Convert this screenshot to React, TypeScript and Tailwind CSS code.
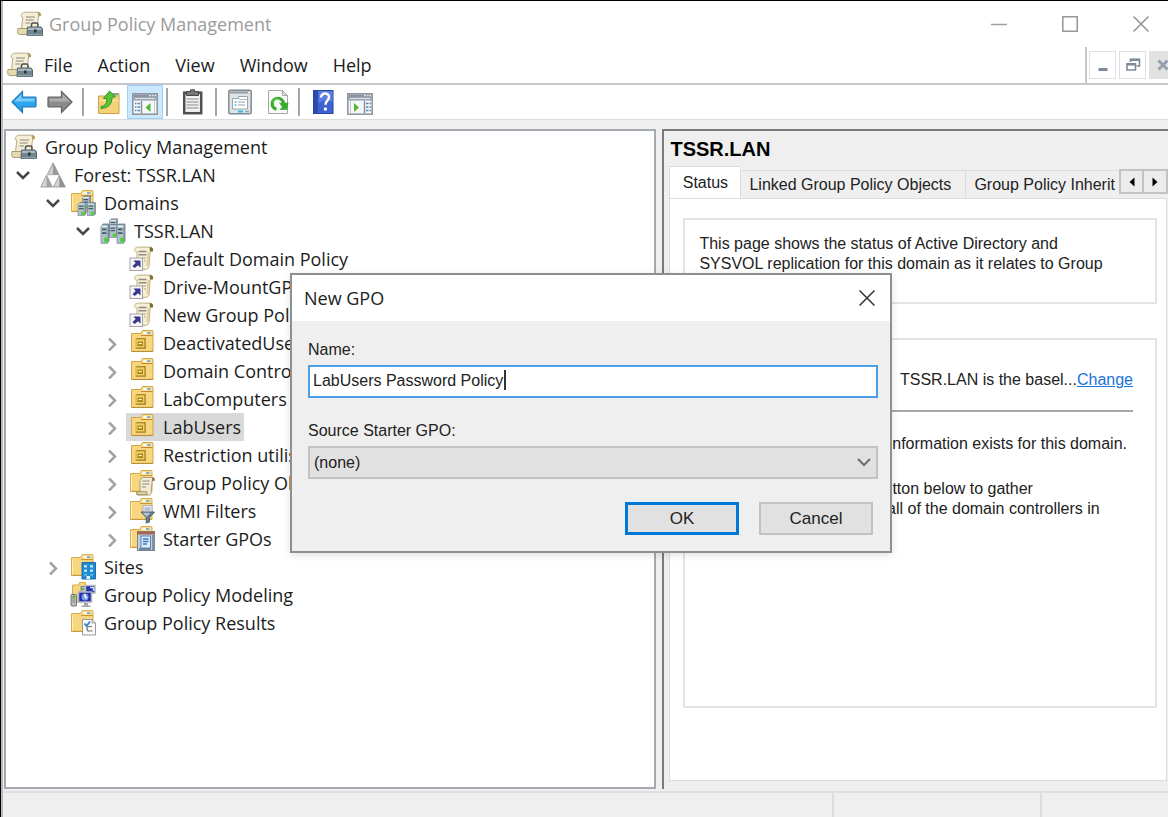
import type { ReactNode } from "react";

type IconProps = { className?: string };

const ICON = "h-[26px] w-[26px] shrink-0";

function Svg({ children, className = ICON }: { children: ReactNode; className?: string }) {
  return (
    <svg viewBox="0 0 26 26" className={className} fill="none" aria-hidden="true">
      {children}
    </svg>
  );
}

function ConsoleIcon({ className }: IconProps) {
  return (
    <Svg className={className}>
      <path d="M5 2.5C7 .8 9 1.2 11 1.2h10c2.200 0 3 1.400 2.600 3.400l-2 .6-1.600 13H4.500L5.800 6C4 6.500 3.500 4 5 2.500z" fill="#f5eed6" stroke="#b9ac87" />
      <path d="M20.500 1.300c2.800-.3 3.700 1.600 3 3.800l-2.400.2c-.2-1.700-.2-3-.6-4z" fill="#b59f62" />
      <path d="M9 6h9M8.700 9h8M8.300 12h5" stroke="#8c8a82" strokeWidth="1.200" />
      <path d="M1 17.500h11v6H2.500C.5 23.500.3 19.500 1 17.500z" fill="#e6dab0" stroke="#a99a6c" />
      <path d="M14.500 16v-2.500c0-1 .6-1.500 1.500-1.500h3.500c1 0 1.500.5 1.500 1.500V16" stroke="#4b4f52" strokeWidth="1.500" />
      <path d="M10.500 16h13.500l1.500 2v6.500H10z" fill="#71858f" stroke="#52636c" />
      <path d="M11 16.700h12.700l1 2.300H10.800z" fill="#a9bac3" />
      <rect x="17" y="18.500" width="2.600" height="3" fill="#28333a" />
      <path d="M10.500 23.800h14.600" stroke="#9fb0b8" />
    </Svg>
  );
}

function ForestIcon() {
  return (
    <Svg>
      <path d="M13 .8l6 12H7.200z" fill="#cdcdcd" stroke="#8f8f8f" strokeWidth=".8" />
      <path d="M13 .8l6 12h-6z" fill="#999" />
      <path d="M6.500 13.200l6 11.800H.8z" fill="#d6d6d6" stroke="#8f8f8f" strokeWidth=".8" />
      <path d="M6.500 13.200l6 11.800h-6z" fill="#a2a2a2" />
      <path d="M19.300 13.200l6 11.800H13.400z" fill="#d3d3d3" stroke="#8f8f8f" strokeWidth=".8" />
      <path d="M19.300 13.200l6 11.800h-6z" fill="#929292" />
      <path d="M7.500 13.600h10.900L13 24z" fill="#fff" />
    </Svg>
  );
}

function FolderShape() {
  return (
    <>
      <path d="M1.500 3.500h9.500l1-2.500c.2-.4.500-.5 1-.5h9c.8 0 1 .4 1 1V21.500h-21.500z" fill="#f7d67f" stroke="#d9ac4f" />
      <path d="M12.500 1.500h9.500v3h-9.500z" fill="#fae7ae" />
      <path d="M13.500 3h3" stroke="#fff" strokeWidth="1.500" />
      <path d="M17 3h3.500" stroke="#5ba3cf" strokeWidth="1.500" />
      <path d="M11 5.500h11.800M2 21.300h20.500" stroke="#cb9838" />
      <path d="M2.500 5v15.500" stroke="#fdeebb" />
    </>
  );
}

function Server({ x, y }: { x: number; y: number }) {
  return (
    <g transform={`translate(${x} ${y})`}>
      <path d="M.5 2L2.500.500h6V12l-1.500 1.500H.5z" fill="#8399a4" stroke="#647985" strokeWidth=".6" />
      <path d="M.8 2.200h6v11h-6z" fill="#b0c1ca" />
      <path d="M1.500 4.200h4.500M1.500 6.700h4.500" stroke="#465b67" strokeWidth="1.200" />
      <path d="M1 2h6" stroke="#eef5f8" />
      <rect x="3.700" y="9.800" width="3.200" height="3" fill="#47d72b" />
    </g>
  );
}

function DomainsIcon() {
  return (
    <Svg>
      <FolderShape />
      <Server x={12} y={5.500} />
      <Server x={7.500} y={12} />
      <Server x={17} y={12} />
    </Svg>
  );
}

function DomainIcon() {
  return (
    <Svg>
      <Server x={9} y={0.300} />
      <Server x={9} y={6} />
      <g transform="translate(.5 4.500) scale(1 1.480)"><Server x={0} y={0.500} /></g>
      <g transform="translate(16.500 4.500) scale(1 1.480)"><Server x={0} y={0.500} /></g>
    </Svg>
  );
}

function PolicyLinkIcon() {
  return (
    <Svg>
      <path d="M6.500 2c1.500-1 3-.9 4.500-.9h10.500c2 0 2.500 1.600 2 3.500l-2.300.4-1 14c-.2 3-1.600 4.400-4.200 4.400H8V6C5.300 6 4.800 3.300 6.500 2z" fill="#f6efd3" stroke="#c0b184" />
      <path d="M20.500 1.200c2.700-.4 4.200 1.300 3.300 4.200l-2.600.1z" fill="#7c683b" />
      <path d="M19.500 6L18.300 20" stroke="#dfd09c" strokeWidth="2" />
      <path d="M9.500 5.500h8M9.500 8.700h8" stroke="#8e8d86" strokeWidth="1.400" />
      <path d="M13 12h4M15 15h2" stroke="#aaa89d" />
      <rect x="1" y="12" width="12.500" height="12.500" fill="#f7f7f7" stroke="#a1a1a1" />
      <path d="M4.500 14.500h7v7L9 19.300 5.700 22 3.500 20l3.200-3z" fill="#35358b" />
    </Svg>
  );
}

function OuIcon() {
  return (
    <Svg>
      <path d="M2.500 3.500H12l1-2.300C13.200.7 13.500.5 14 .5h9c.8 0 1 .5 1 1V21.500H2.500z" fill="#f7d67f" stroke="#d3a444" />
      <path d="M13.500 1.500H23v3h-9.500z" fill="#fae7ae" />
      <path d="M14.500 3h3" stroke="#fff" strokeWidth="1.500" />
      <path d="M18 3h3.500" stroke="#5ba3cf" strokeWidth="1.500" />
      <path d="M12 5.500h11.500M3 21.400h21" stroke="#bf892e" />
      <rect x="7" y="8.500" width="9.500" height="10" fill="#efcf64" stroke="#d3b04a" />
      <path d="M7.500 8.800h9M16 9v9M7.500 18h9" stroke="#9a7820" strokeWidth="1" />
      <rect x="8.500" y="11.500" width="5.500" height="4.500" fill="#a88317" />
      <path d="M9.500 13.500h3.500" stroke="#fff1a8" strokeWidth="1.300" />
    </Svg>
  );
}

function ObjectsIcon() {
  return (
    <Svg>
      <FolderShape />
      <path d="M12 8.500c1-1 2-1 3-1h8.500c2 0 2.300 1.500 1.700 3h-2l-1.200 13c-.3 1-1 1.500-2 1.500H9c-1.500 0-1.800-2-1-3.300h3V11z" fill="#f2ecd5" stroke="#aaa07c" />
      <path d="M23 7.500c2.500 0 3 1.600 2.300 3.500H23z" fill="#8e7a4a" />
      <path d="M13.500 11h7M13.300 14h7M13 17h4" stroke="#8f8e85" strokeWidth="1.200" />
      <path d="M8 21.700h10v3H8z" fill="#e0d3a4" stroke="#a69568" />
    </Svg>
  );
}

function FilterIcon() {
  return (
    <Svg>
      <FolderShape />
      <rect x="14" y="7.500" width="9" height="8" fill="#eef1f5" stroke="#aab1bd" />
      <path d="M15.500 10h6M15.500 12h6" stroke="#8b91b5" />
      <path d="M12 14h13.500l-5 5.500V24l-3.300 1v-5.500z" fill="#67818f" stroke="#4b626e" />
      <path d="M13.500 14.700h8l-4 4z" fill="#b6c9d4" />
    </Svg>
  );
}

function StarterIcon() {
  return (
    <Svg>
      <FolderShape />
      <rect x="8.500" y="5.500" width="17" height="19" fill="#c6ced8" stroke="#7a8590" />
      <path d="M8 5.500h17.500v3H8z" fill="#a46a4e" />
      <path d="M23 9h2.500v15H23z" fill="#8492a1" />
      <rect x="12" y="10" width="9.500" height="12" fill="#deebf8" stroke="#4f86c0" />
      <path d="M14 13h5.500M14 15.500h5.500M14 18h4" stroke="#3c78bb" strokeWidth="1.300" />
      <path d="M10 22h12v2H10z" fill="#728699" />
    </Svg>
  );
}

function SitesIcon() {
  return (
    <Svg>
      <FolderShape />
      <path d="M12 8.500h13.500V25h-13.500z" fill="#238bd0" stroke="#1b6fb1" />
      <path d="M14 11h3v2.500h-3zM20 11h3v2.500h-3zM14 15.500h3V18h-3zM20 15.500h3V18h-3z" fill="#a9e3ff" />
      <path d="M14 20h3v1.500h-3zM20 20h3v1.500h-3z" fill="#6cc4f1" />
      <path d="M16.500 22h3.500v3h-3.500z" fill="#def4ff" />
    </Svg>
  );
}

function ModelingIcon() {
  return (
    <Svg>
      <path d="M2.500 3h6l1-2.500h6V20H2.500z" fill="#f7d67f" stroke="#d9ac4f" />
      <rect x="11" y="4.500" width="4.500" height="8" fill="#b8bcc0" stroke="#7c8285" />
      <path d="M13 6v2" stroke="#45be32" strokeWidth="2" />
      <rect x="15.500" y="3.500" width="9.500" height="7.500" fill="#2431a8" stroke="#b6b9c3" strokeWidth="1.500" />
      <path d="M20 5.500h3.500v3.500" stroke="#cbd4ff" strokeWidth="1.500" />
      <rect x="1" y="12.500" width="5.500" height="11.500" rx=".8" fill="#bdbdbd" stroke="#747474" />
      <path d="M2.500 15H5" stroke="#46be2c" strokeWidth="2.500" />
      <path d="M2.500 18h2.500M2.500 20h2.500" stroke="#858585" />
      <rect x="8.500" y="10" width="13" height="10" fill="#2030b2" stroke="#b4b7c3" strokeWidth="1.500" />
      <circle cx="15" cy="15" r="3.500" fill="#7d9be4" />
      <path d="M15 15v-3M15 15l2 1" stroke="#fff" strokeWidth="1.400" />
      <path d="M14 21h4v2.500h2.500V25h-9v-1.500H14z" fill="#a7a7a7" />
    </Svg>
  );
}

function ResultsIcon() {
  return (
    <Svg>
      <FolderShape />
      <path d="M12.500 9.500h9.500l3.500 3.500v12H12.500z" fill="#fafafa" stroke="#9b9b9b" />
      <path d="M22 9.500V13h3.500" stroke="#9b9b9b" />
      <path d="M14.500 13.500l2 2.500 3.500-4.500" stroke="#2787c2" strokeWidth="1.800" />
      <path d="M22 16.500h-3c-2.500 0-2.500 4.500 0 4.500h3.500" stroke="#777" strokeWidth="1.200" />
    </Svg>
  );
}

function ArrowIcon({ tone }: { tone: "back" | "forward" }) {
  const back = tone === "back";
  return (
    <Svg>
      <g transform={back ? undefined : "translate(26 0) scale(-1 1)"}>
        <path d="M1 13L11.500 2.500v5.700h12.700c.6 0 .8.3.8.8v8c0 .6-.3.800-.8.800H11.500v5.700z" fill={back ? "#2da4ec" : "#8c8c8c"} stroke={back ? "#1c79bd" : "#626262"} strokeWidth="1.200" />
        <path d="M3 12.500L10.500 5v4.500h13v3z" fill={back ? "#7accf9" : "#adadad"} />
      </g>
    </Svg>
  );
}

function UpIcon() {
  return (
    <Svg>
      <path d="M2.500 7h9l1-2.500h10.500V24.500H2.500z" fill="#f5d276" stroke="#cba046" />
      <path d="M3 11.500h19.500" stroke="#fce9ad" />
      <path d="M17 5.500h5" stroke="#5ba3cf" strokeWidth="1.500" />
      <path d="M5 17.500c4.500-.5 6-3.500 5.800-8L7.500 9.300 13.500 2l6 5.700-3.500.6c.2 6.700-4 11-11 11.200z" fill="#55c43a" stroke="#2e9524" />
    </Svg>
  );
}

function PaneIcon({ flip }: { flip?: boolean }) {
  return (
    <Svg>
      <rect x=".8" y="4.800" width="24.400" height="20.400" fill="#f5f7f8" stroke="#88929c" strokeWidth="1.500" />
      <path d="M1.500 5.500h23v6h-23z" fill="#8995a3" />
      <path d="M2.500 9.500h21" stroke="#d8dfe5" strokeWidth="1.500" />
      <path d="M17 6.700h2M20 6.700h1.500M22.500 6.700h1.500" stroke="#e6ebef" strokeWidth="1.300" />
      {flip ? (
        <>
          <path d="M17.500 12v12.500" stroke="#88929c" strokeWidth="1.500" />
          <path d="M3.500 12v12.500" stroke="#c3c8cd" />
          <path d="M19 14.500h2.500M22.500 14.500H24M19 18h2.500M22.500 18H24M19 21.500h2.500M22.500 21.500H24" stroke="#5287b5" strokeWidth="1.500" />
          <path d="M7 14v9l5-4.500z" fill="#4fb934" />
        </>
      ) : (
        <>
          <path d="M9.500 12v12.500" stroke="#88929c" strokeWidth="1.500" />
          <path d="M22.500 12v12.500" stroke="#c3c8cd" />
          <path d="M3 14.500h1.500M5.500 14.500h2.500M3 18h1.500M5.500 18h2.500M3 21.500h1.500M5.500 21.500h2.500" stroke="#5287b5" strokeWidth="1.500" />
          <path d="M18.500 14v9l-5-4.500z" fill="#4fb934" />
        </>
      )}
    </Svg>
  );
}

function ClipboardIcon() {
  return (
    <Svg>
      <rect x="4.200" y="3.700" width="17" height="20.500" fill="#f2f2f2" stroke="#505050" strokeWidth="2.500" />
      <path d="M6.500 2.500h4V.8h4v1.700h4V6.500h-12z" fill="#777" stroke="#484848" />
      <path d="M6.500 10h12M6.500 13h12M6.500 16h12M6.500 19h12" stroke="#ababab" strokeWidth="1.400" />
    </Svg>
  );
}

function PropertiesIcon() {
  return (
    <Svg>
      <rect x="1.800" y="1.300" width="22.400" height="23.400" rx="1.500" fill="#dfe3e6" stroke="#7f8a93" strokeWidth="1.500" />
      <path d="M3 3.500h19.500" stroke="#919ca6" strokeWidth="2" />
      <path d="M21 3.500h2" stroke="#fff" />
      <path d="M5.500 9.500h6V7.500h9V20h-15z" fill="#fff" stroke="#99a4ae" />
      <path d="M12 10.500h8" stroke="#b2bcc5" />
      <path d="M7.500 13h2M7.500 16h2" stroke="#58b9df" strokeWidth="1.500" />
      <path d="M11 13h7M11 16h7" stroke="#9a9fa4" strokeWidth="1.200" />
      <path d="M11 22.500h5" stroke="#25bce9" strokeWidth="2" />
      <path d="M18 22.500h4" stroke="#98a3ab" strokeWidth="1.500" />
    </Svg>
  );
}

function RefreshIcon() {
  return (
    <Svg>
      <path d="M3.500 1.500h14l5 5v18h-19z" fill="#fafafa" stroke="#a8a8a8" />
      <path d="M17.500 1.500v5h5z" fill="#ddd" stroke="#a8a8a8" />
      <path d="M11.500 20.300a5.600 5.600 0 1 1 6.900-6" stroke="#36ad2c" strokeWidth="3.200" />
      <path d="M14 13.700h9.500l-1.300 7-7.700.3 2.700-3z" fill="#36ad2c" />
      <path d="M8 13.500c.5-3 4-4.500 6.500-2.500" stroke="#8ee57b" />
    </Svg>
  );
}

function HelpIcon() {
  return (
    <Svg>
      <rect x="3.500" y="1.500" width="19.500" height="23" fill="#3c62d2" stroke="#2743a0" />
      <path d="M4 2h4v22H4z" fill="#2c4bad" />
      <path d="M8.500 2h14v11c-5-3-9-2-14 1z" fill="#5a7ee6" />
      <path d="M11 8.500c.3-5.500 8.700-5 8 .2-.4 3-3.500 3.200-3.500 7" stroke="#fff" strokeWidth="2.500" />
      <circle cx="15.400" cy="20" r="1.700" fill="#fff" />
    </Svg>
  );
}

function Chevron({ open }: { open?: boolean }) {
  return open ? (
    <svg viewBox="0 0 16 16" className="h-4 w-4" fill="none" aria-hidden="true">
      <path d="M2 5l6 6 6-6" stroke="#474747" strokeWidth="2.500" />
    </svg>
  ) : (
    <svg viewBox="0 0 16 16" className="h-4 w-4" fill="none" aria-hidden="true">
      <path d="M5 3.500l6 6-6 6" stroke="#a3a3a3" strokeWidth="2.500" />
    </svg>
  );
}

type Row = {
  label: string;
  indent: string;
  icon: ReactNode;
  open?: boolean;
  closed?: boolean;
  selected?: boolean;
  level: number;
};

const L1 = "pl-[9px]";
const L2 = "pl-[39px]";
const L3 = "pl-[69px]";
const L4 = "pl-[98px]";

const rows: Row[] = [
  { label: "Forest: TSSR.LAN", indent: L1, level: 2, icon: <ForestIcon />, open: true },
  { label: "Domains", indent: L2, level: 3, icon: <DomainsIcon />, open: true },
  { label: "TSSR.LAN", indent: L3, level: 4, icon: <DomainIcon />, open: true },
  { label: "Default Domain Policy", indent: L4, level: 5, icon: <PolicyLinkIcon /> },
  { label: "Drive-MountGPO", indent: L4, level: 5, icon: <PolicyLinkIcon /> },
  { label: "New Group Policy Object", indent: L4, level: 5, icon: <PolicyLinkIcon /> },
  { label: "DeactivatedUsers", indent: L4, level: 5, icon: <OuIcon />, closed: true },
  { label: "Domain Controllers", indent: L4, level: 5, icon: <OuIcon />, closed: true },
  { label: "LabComputers", indent: L4, level: 5, icon: <OuIcon />, closed: true },
  { label: "LabUsers", indent: L4, level: 5, icon: <OuIcon />, closed: true, selected: true },
  { label: "Restriction utilisateurs", indent: L4, level: 5, icon: <OuIcon />, closed: true },
  { label: "Group Policy Objects", indent: L4, level: 5, icon: <ObjectsIcon />, closed: true },
  { label: "WMI Filters", indent: L4, level: 5, icon: <FilterIcon />, closed: true },
  { label: "Starter GPOs", indent: L4, level: 5, icon: <StarterIcon />, closed: true },
  { label: "Sites", indent: L2, level: 3, icon: <SitesIcon />, closed: true },
  { label: "Group Policy Modeling", indent: L2, level: 3, icon: <ModelingIcon /> },
  { label: "Group Policy Results", indent: L2, level: 3, icon: <ResultsIcon /> },
];

function Tree() {
  return (
    <nav aria-label="Console tree" className="overflow-hidden border-2 border-[#a5a9b0] bg-white pt-[2px]">
      <ul role="tree">
        <li role="treeitem" aria-level={1} className="flex h-7 items-center gap-2 pl-[5px]">
          <ConsoleIcon className={ICON} />
          <span>Group Policy Management</span>
        </li>
        {rows.map((r) => (
          <li
            key={r.label}
            role="treeitem"
            aria-level={r.level}
            aria-selected={r.selected ?? false}
            className={`flex h-7 items-center whitespace-nowrap ${r.indent}`}
          >
            <span className="flex w-[22px] shrink-0">
              {r.open || r.closed ? (
                <button type="button" aria-label={`Toggle ${r.label}`}>
                  <Chevron open={r.open} />
                </button>
              ) : null}
            </span>
            <span className={`flex h-7 items-center gap-2 px-[3px] ${r.selected ? "bg-[#d9d9d9]" : ""}`}>
              {r.icon}
              {r.label}
            </span>
          </li>
        ))}
      </ul>
    </nav>
  );
}

function TitleBar() {
  return (
    <header className="flex h-[46px] items-center bg-white pl-3.5 text-[#9b9b9b]">
      <ConsoleIcon className={ICON} />
      <h1 className="ml-1.5 flex-1">Group Policy Management</h1>
      <div className="flex items-center">
        <button type="button" aria-label="Minimize" className="flex h-[46px] w-[70px] items-center justify-center">
          <svg viewBox="0 0 16 16" className="h-4 w-4" aria-hidden="true"><path d="M0 8.500h16" stroke="#a0a0a0" strokeWidth="1.500" /></svg>
        </button>
        <button type="button" aria-label="Maximize" className="flex h-[46px] w-[72px] items-center justify-center">
          <svg viewBox="0 0 16 16" className="h-4 w-4" fill="none" aria-hidden="true"><path d="M.8.800h14.400v14.400H.8z" stroke="#979797" strokeWidth="1.500" /></svg>
        </button>
        <button type="button" aria-label="Close" className="flex h-[46px] w-[62px] items-center justify-center pl-2">
          <svg viewBox="0 0 16 16" className="h-4 w-4" aria-hidden="true"><path d="M.5.500l15 15M15.500.500l-15 15" stroke="#929292" strokeWidth="1.500" /></svg>
        </button>
      </div>
    </header>
  );
}

function MenuBar() {
  return (
    <div className="flex h-[38px] bg-white">
      <div className="flex flex-1 items-center border-b-2 border-[#c6c6cc] pl-1">
        <ConsoleIcon className={ICON} />
        <nav aria-label="Menu" className="flex gap-[25px] pl-[11px]">
          {["File", "Action", "View", "Window", "Help"].map((m) => (
            <button type="button" key={m}>{m}</button>
          ))}
        </nav>
      </div>
      <div className="flex items-center gap-[3px] overflow-hidden border-b-2 border-l-2 border-[#c6c6cc] pl-[2px]">
        <button type="button" aria-label="Minimize child window" className="flex h-7 w-[27px] items-center justify-center border border-[#dfe1e4]">
          <svg viewBox="0 0 16 16" className="h-4 w-4" aria-hidden="true"><path d="M3.500 12.500h9" stroke="#7c8b9b" strokeWidth="3" /></svg>
        </button>
        <button type="button" aria-label="Restore child window" className="flex h-7 w-[27px] items-center justify-center border border-[#dfe1e4]">
          <svg viewBox="0 0 16 16" className="h-4 w-4" fill="none" aria-hidden="true">
            <path d="M5.500 5V2.500h9v6.500h-3" stroke="#7c8b9b" strokeWidth="1.600" />
            <path d="M5 2.800h9.800" stroke="#7c8b9b" strokeWidth="2.500" />
            <path d="M2 7h8.500v6H2z" stroke="#7c8b9b" strokeWidth="1.600" />
            <path d="M1.500 7.300h9.500" stroke="#7c8b9b" strokeWidth="2.500" />
          </svg>
        </button>
        <button type="button" aria-label="Close child window" className="flex h-7 w-[19px] items-center justify-end overflow-hidden bg-[#e2e2e2]">
          <svg viewBox="0 0 11 14" className="h-3.5 w-[11px]" aria-hidden="true"><path d="M1.500 2.500l9 9M10.500 2.500l-9 9" stroke="#94a0ad" strokeWidth="3" /></svg>
        </button>
      </div>
    </div>
  );
}

function Tool({ label, active, children }: { label: string; active?: boolean; children: ReactNode }) {
  return (
    <button
      type="button"
      aria-label={label}
      className={`flex h-[34px] w-9 shrink-0 items-center justify-center border ${active ? "border-[#99d1ff] bg-[#cce8ff]" : "border-transparent"}`}
    >
      {children}
    </button>
  );
}

function Divider() {
  return <span className="h-7 w-[2px] shrink-0 bg-[#a5a5a5]" />;
}

function Toolbar() {
  return (
    <div className="flex h-[35px] items-center border-b border-[#dcdcdc] bg-white pl-[3px]">
      <Tool label="Back"><ArrowIcon tone="back" /></Tool>
      <Tool label="Forward"><ArrowIcon tone="forward" /></Tool>
      <span className="flex items-center gap-[7px] pl-1">
        <Divider />
        <span className="flex">
          <Tool label="Up one level"><UpIcon /></Tool>
          <Tool label="Show or hide console tree" active><PaneIcon /></Tool>
        </span>
      </span>
      <span className="flex items-center gap-[7px] pl-[3px]">
        <Divider />
        <Tool label="Copy"><ClipboardIcon /></Tool>
      </span>
      <span className="flex items-center gap-[5px] pl-1">
        <Divider />
        <span className="flex gap-[2px]">
          <Tool label="Properties"><PropertiesIcon /></Tool>
          <Tool label="Refresh"><RefreshIcon /></Tool>
        </span>
      </span>
      <span className="flex items-center gap-[5px] pl-[2px]">
        <Divider />
        <span className="flex gap-[1px]">
          <Tool label="Help"><HelpIcon /></Tool>
          <Tool label="Show or hide action pane"><PaneIcon flip /></Tool>
        </span>
      </span>
    </div>
  );
}

function DetailPane() {
  return (
    <section
      aria-labelledby="detail-title"
      className="flex min-w-0 flex-col overflow-hidden border-t-2 border-l-2 border-[#7b7b7b] bg-[#efefef] pb-2 pl-[5px] font-['Liberation_Sans',Arial,sans-serif] text-base leading-5 text-[#222]"
    >
      <h2 id="detail-title" className="h-[35px] pt-1.5 pl-px text-xl leading-6 font-bold text-black">TSSR.LAN</h2>
      <div className="flex items-end">
        <div role="tablist" className="flex min-w-0 flex-1 items-end overflow-hidden whitespace-nowrap">
          <button type="button" role="tab" aria-selected="true" className="h-8 w-[71px] shrink-0 border-t border-l border-[#dcdcdc] bg-white">Status</button>
          <button type="button" role="tab" aria-selected="false" className="h-7 w-[225px] shrink-0 border-t border-l border-[#dcdcdc] px-2 text-left">Linked Group Policy Objects</button>
          <button type="button" role="tab" aria-selected="false" className="h-7 flex-1 border-t border-l border-[#dcdcdc] pl-2 text-left">Group Policy Inherit</button>
        </div>
        <div className="flex self-start pt-[3px]">
          <button type="button" aria-label="Scroll tabs left" className="flex h-[25px] w-[25px] items-center justify-center border-2 border-[#c3c3c3] bg-[#ececec]">
            <svg viewBox="0 0 10 10" className="h-2.5 w-2.5" aria-hidden="true"><path d="M7.500 .5v9L2.500 5z" fill="#000" /></svg>
          </button>
          <button type="button" aria-label="Scroll tabs right" className="flex h-[25px] w-6 items-center justify-center border-y-2 border-r-2 border-[#c3c3c3] bg-[#ececec]">
            <svg viewBox="0 0 10 10" className="h-2.5 w-2.5" aria-hidden="true"><path d="M2.500 .5v9l5-4.500z" fill="#000" /></svg>
          </button>
        </div>
      </div>
      <div role="tabpanel" className="mr-px flex flex-1 flex-col gap-[34px] border border-[#dcdcdc] bg-white pt-[19px] pr-[9px] pb-[72px] pl-[13px]">
        <div className="h-[86px] border-2 border-[#e4e4e4] pt-3.5 pl-3.5">
          This page shows the status of Active Directory and
          <br />
          SYSVOL replication for this domain as it relates to Group
          <br />
          Policy.
        </div>
        <div className="flex-1 border-2 border-[#e4e4e4] pt-[30px] pr-[22px] pl-3.5">
          <p className="flex justify-end pb-5">
            <span>TSSR.LAN is the basel...</span>
            <a href="#change" className="text-[#1a73d9] underline">Change</a>
          </p>
          <hr className="border-t-2 border-[#a8a8a8]" />
          <p className="pt-[22px] pr-1.5 pb-[25px] text-right whitespace-nowrap">No Infrastructure Status information exists for this domain.</p>
          <p className="whitespace-nowrap">
            Click on the Detect Now button below to gather
            <br />
            the replication status from all of the domain controllers in
            <br />
            this domain.
          </p>
        </div>
      </div>
    </section>
  );
}

function NewGpoDialog() {
  return (
    <div
      role="dialog"
      aria-labelledby="dialog-title"
      className="absolute top-[272px] left-[289px] w-[602px] border-2 border-[#8f8f8f] bg-[#efefef] font-['Liberation_Sans',Arial,sans-serif] text-base leading-5 text-[#222] shadow-[0_2px_8px_rgba(0,0,0,0.12)]"
    >
      <div className="flex h-[46px] items-center justify-between bg-white pr-[15px] pl-3">
        <h2 id="dialog-title" className="font-['Open_Sans','Noto_Sans',sans-serif] text-lg leading-6">New GPO</h2>
        <button type="button" aria-label="Close dialog">
          <svg viewBox="0 0 16 16" className="h-4 w-4" aria-hidden="true"><path d="M.5.500l15 15M15.500.500l-15 15" stroke="#333" strokeWidth="1.500" /></svg>
        </button>
      </div>
      <form className="flex flex-col pt-[19px] pr-3 pb-4 pl-4" onSubmit={(e) => e.preventDefault()}>
        <label htmlFor="gpo-name" className="pb-[5px]">Name:</label>
        <div className="relative pb-[23px]">
          <input id="gpo-name" type="text" defaultValue="LabUsers Password Policy" className="h-[33px] w-full border-2 border-[#4a9fe6] bg-white pb-[2px] pl-[3px] outline-none" />
          <span className="absolute top-[5px] left-[196px] h-5 w-[2px] bg-[#333]" />
        </div>
        <label htmlFor="starter" className="pb-[5px]">Source Starter GPO:</label>
        <div className="relative">
          <select id="starter" className="h-[33px] w-full appearance-none border-2 border-[#c2c2c2] bg-[#e1e1e1] pl-1 outline-none">
            <option>(none)</option>
          </select>
          <svg viewBox="0 0 16 16" className="pointer-events-none absolute top-2 right-1.5 h-4 w-4" fill="none" aria-hidden="true">
            <path d="M2 5l6 6 6-6" stroke="#6e6e6e" strokeWidth="2" />
          </svg>
        </div>
        <div className="flex justify-end gap-5 pt-[23px] pr-[5px] text-[17px]">
          <button type="submit" className="h-[33px] w-[114px] border-[3px] border-[#0078d7] bg-[#e1e1e1]">OK</button>
          <button type="button" className="h-[33px] w-[114px] border-2 border-[#c2c2c2] bg-[#e1e1e1]">Cancel</button>
        </div>
      </form>
    </div>
  );
}

export default function App() {
  return (
    <div className="relative flex min-h-screen flex-col overflow-hidden border-t border-l border-black bg-[#efefef] font-['Open_Sans','Noto_Sans',sans-serif] text-lg leading-6 text-[#1c1c1c]">
      <div className="flex flex-1 flex-col border-l-2 border-[#b9b9b9]">
        <TitleBar />
        <MenuBar />
        <Toolbar />
        <main className="grid flex-1 grid-cols-[653fr_506fr] gap-1.5 pt-[9px] pl-px">
          <Tree />
          <DetailPane />
        </main>
        <footer className="mt-[2px] flex h-[26px] border-t-2 border-[#e0e0e0]">
          <span className="flex-1 border-r-2 border-[#dcdcdc]" />
          <span className="w-[208px] border-r-2 border-[#dcdcdc]" />
          <span className="w-[126px]" />
        </footer>
      </div>
      <NewGpoDialog />
    </div>
  );
}
